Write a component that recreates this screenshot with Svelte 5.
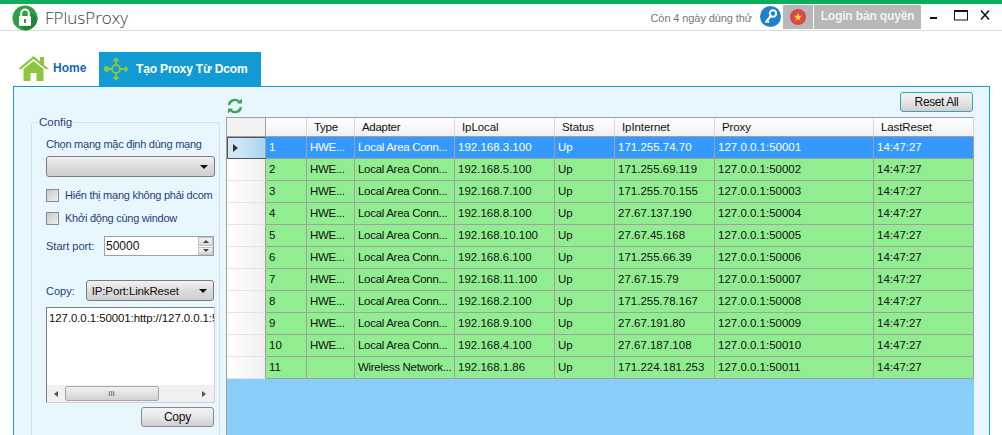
<script>
  const columns = ['', 'Type', 'Adapter', 'IpLocal', 'Status', 'IpInternet', 'Proxy', 'LastReset'];
  const rows = [
    ['1', 'HWE...', 'Local Area Conn...', '192.168.3.100', 'Up', '171.255.74.70', '127.0.0.1:50001', '14:47:27'],
    ['2', 'HWE...', 'Local Area Conn...', '192.168.5.100', 'Up', '171.255.69.119', '127.0.0.1:50002', '14:47:27'],
    ['3', 'HWE...', 'Local Area Conn...', '192.168.7.100', 'Up', '171.255.70.155', '127.0.0.1:50003', '14:47:27'],
    ['4', 'HWE...', 'Local Area Conn...', '192.168.8.100', 'Up', '27.67.137.190', '127.0.0.1:50004', '14:47:27'],
    ['5', 'HWE...', 'Local Area Conn...', '192.168.10.100', 'Up', '27.67.45.168', '127.0.0.1:50005', '14:47:27'],
    ['6', 'HWE...', 'Local Area Conn...', '192.168.6.100', 'Up', '171.255.66.39', '127.0.0.1:50006', '14:47:27'],
    ['7', 'HWE...', 'Local Area Conn...', '192.168.11.100', 'Up', '27.67.15.79', '127.0.0.1:50007', '14:47:27'],
    ['8', 'HWE...', 'Local Area Conn...', '192.168.2.100', 'Up', '171.255.78.167', '127.0.0.1:50008', '14:47:27'],
    ['9', 'HWE...', 'Local Area Conn...', '192.168.9.100', 'Up', '27.67.191.80', '127.0.0.1:50009', '14:47:27'],
    ['10', 'HWE...', 'Local Area Conn...', '192.168.4.100', 'Up', '27.67.187.108', '127.0.0.1:50010', '14:47:27'],
    ['11', '', 'Wireless Network...', '192.168.1.86', 'Up', '171.224.181.253', '127.0.0.1:50011', '14:47:27']
  ];
</script>

<div class="window">
  <header class="titlebar">
    <svg class="logo" width="26" height="26" viewBox="0 0 26 26">
      <circle cx="13" cy="13" r="12.5" fill="#2f9e44"/>
      <path d="M13 25.5A12.5 12.5 0 0 0 25.5 13 L19 8v12H8l5 5.5z" fill="#23853a"/>
      <rect x="7" y="11" width="12" height="10" rx="1" fill="#fff"/>
      <path d="M9.2 11V8.4a3.8 3.8 0 0 1 7.6 0V11" fill="none" stroke="#fff" stroke-width="2"/>
      <rect x="12" y="14" width="2" height="4" fill="#2f9e44"/>
    </svg>
    <span class="app-name">FPlusProxy</span>
    <span class="trial">Còn 4 ngày dùng thử</span>
    <svg class="key" width="21" height="21" viewBox="0 0 21 21">
      <circle cx="10.5" cy="10.5" r="10.5" fill="#1c7fd0"/>
      <circle cx="13" cy="7.5" r="3.2" fill="none" stroke="#fff" stroke-width="2"/>
      <path d="M10.8 10 5.5 16.5M7 14.8l2 1.7" fill="none" stroke="#fff" stroke-width="2"/>
    </svg>
    <div class="flag-box">
      <svg width="16" height="16" viewBox="0 0 16 16">
        <circle cx="8" cy="8" r="8" fill="#d9474a"/>
        <path d="M8 3.6 9.1 6.8h3.3L9.700 8.800l1 3.200L8 10l-2.700 2 1-3.200-2.700-2h3.300z" fill="#f7d533"/>
      </svg>
    </div>
    <div class="login">Login bản quyền</div>
    <div class="win-controls">
      <svg class="min" width="8" height="20" viewBox="0 0 8 20"><rect x="0" y="8" width="7" height="2" fill="#111"/></svg>
      <svg class="max" width="14" height="20" viewBox="0 0 14 20"><rect x="0.5" y="2" width="13" height="9" fill="none" stroke="#111"/><rect x="0" y="1" width="14" height="2" fill="#111"/></svg>
      <svg class="close" width="10" height="20" viewBox="0 0 10 20"><path d="M1 1.500 9 10.500M9 1.500 1 10.500" stroke="#111" stroke-width="1.500"/></svg>
    </div>
  </header>

  <nav class="tabs">
    <div class="tab home">
      <svg width="31" height="25" viewBox="0 0 31 25">
        <path d="M15.500 0 31 13h-3.500L15.500 3 3.500 13H0z" fill="#8cc63f"/>
        <rect x="22" y="1" width="4" height="8" fill="#8cc63f"/>
        <path d="M5.500 13 15.500 5l10 8v12h-7v-8h-6v8h-7z" fill="#8cc63f"/>
      </svg>
      <span>Home</span>
    </div>
    <div class="tab active">
      <svg width="24" height="24" viewBox="0 0 24 24" fill="none" stroke="#8cc63f" stroke-width="1.800">
        <circle cx="12" cy="12" r="4"/>
        <path d="M12 8V2M12 16v6M16 12h7M8 12H3"/>
        <path d="M9.500 4 12 1.500 14.500 4M9.500 20 12 22.500 14.500 20M21 9.500 23.500 12 21 14.500"/>
        <circle cx="2.500" cy="12" r="2" fill="#8cc63f"/>
      </svg>
      <span>Tạo Proxy Từ Dcom</span>
    </div>
  </nav>

  <main class="panel">
    <fieldset class="config">
      <legend>Config</legend>
      <div class="label first">Chọn mạng mặc định dùng mạng</div>
      <div class="combo wide"><span></span><i class="arrow"></i></div>
      <div class="check one"><b></b><span>Hiển thị mạng không phải dcom</span></div>
      <div class="check two"><b></b><span>Khởi động cùng window</span></div>
      <div class="port">
        <span class="port-label">Start port:</span>
        <div class="spin">
          <span>50000</span>
          <div class="spin-btns"><i class="up"></i><i class="down"></i></div>
        </div>
      </div>
      <div class="copy-row">
        <span class="copy-label">Copy:</span>
        <div class="combo short"><span>IP:Port:LinkReset</span><i class="arrow"></i></div>
      </div>
      <div class="textbox">
        <div class="text">127.0.0.1:50001:http://127.0.0.1:5</div>
        <div class="hscroll">
          <i class="left"></i>
          <div class="thumb">III</div>
          <i class="right"></i>
        </div>
      </div>
      <div class="copy-action"><button class="btn copy-btn">Copy</button></div>
    </fieldset>

    <section class="content">
      <div class="toolbar">
        <svg class="refresh" width="18" height="18" viewBox="0 0 18 18" fill="none" stroke="#3aa655" stroke-width="2.400">
          <path d="M3 8a6 6 0 0 1 10.500-3"/>
          <path d="M15 10a6 6 0 0 1-10.500 3"/>
          <path d="M16 1.500v5h-5z" fill="#3aa655" stroke="none"/>
          <path d="M2 16.500v-5h5z" fill="#3aa655" stroke="none"/>
        </svg>
        <button class="btn reset">Reset All</button>
      </div>
      <div class="grid">
        <div class="row head">
          <div class="rh"></div>
          {#each columns as c}<div class="cell">{c}</div>{/each}
        </div>
        {#each rows as r, i}
          <div class="row" class:selected={i === 0}>
            <div class="rh">{#if i === 0}<i class="pointer"></i>{/if}</div>
            {#each r as v}<div class="cell">{v}</div>{/each}
          </div>
        {/each}
      </div>
    </section>
  </main>
</div>

<style>
  :global(body) { margin: 0; background: #fff; }
  .window {
    height: 435px;
    overflow: hidden;
    border-top: 4px solid #0cae5b;
    box-sizing: border-box;
    font-family: "Liberation Sans", Arial, sans-serif;
    font-size: 11.5px;
    color: #111;
    display: flex;
    flex-direction: column;
  }
  .titlebar {
    height: 27px;
    flex: none;
    box-sizing: border-box;
    border-bottom: 1px solid #dcdcdc;
    display: flex;
    align-items: flex-start;
  }
  .titlebar > * { flex: none; }
  .logo { margin: 1px 0 0 12px; }
  .app-name {
    margin: 0 0 0 7px;
    font-family: "Open Sans", sans-serif;
    font-weight: 300;
    font-size: 17px;
    line-height: 27px;
    color: #444;
  }
  .trial { margin: 6px 0 0 auto; font-size: 11px; letter-spacing: -0.100px; line-height: 16px; color: #777; }
  .key { margin: 2px 0 0 8px; }
  .flag-box {
    width: 30px;
    height: 24px;
    margin: 1px 0 0 2px;
    background: #b8b8b8;
    display: flex;
    align-items: center;
    justify-content: center;
  }
  .login {
    width: 107px;
    height: 24px;
    margin: 1px 0 0 1px;
    background: #b8b8b8;
    color: #f2f2f2;
    font-weight: bold;
    font-size: 12px;
    letter-spacing: -0.150px;
    line-height: 22px;
    text-align: center;
    white-space: nowrap;
  }
  .win-controls { display: flex; margin: 5px 0 0 9px; width: 72px; box-sizing: border-box; }
  .max { margin-left: 16px; }
  .close { margin-left: 12px; }
  .tabs {
    display: flex;
    height: 55px;
    flex: none;
    align-items: flex-end;
    padding-left: 18px;
    font-weight: bold;
    font-size: 12px;
  }
  .tab { height: 34px; display: flex; align-items: center; box-sizing: border-box; }
  .home { width: 81px; color: #1668b8; gap: 4px; padding-bottom: 2px; }
  .active { width: 162px; background: #129ad5; color: #fff; padding-left: 5px; gap: 8px; letter-spacing: -0.150px; }
  .panel {
    flex: 1;
    width: 977px;
    margin-left: 13px;
    box-sizing: border-box;
    border: 1px solid #129ad5;
    background: #e8f7fe;
    display: flex;
    padding-left: 17px;
    align-items: flex-start;
  }
  .config {
    width: 189px;
    height: 400px;
    flex: none;
    box-sizing: border-box;
    margin: 28px 0 0;
    padding: 0 5px 0 14px;
    border: 1px solid #d3e0e8;
    border-radius: 3px;
    min-width: 0;
    font-size: 11px;
  }
  legend { padding: 0 1px; margin-left: -8px; color: #1f3f7a; line-height: 14px; font-size: 11.5px; }
  .label { color: #1f3f7a; line-height: 14px; white-space: nowrap; letter-spacing: -0.250px; }
  .first { margin-top: 8px; }
  .combo {
    height: 21px;
    box-sizing: border-box;
    border: 1px solid #7d7d7d;
    border-radius: 3px;
    background: linear-gradient(#f2f2f2, #dcdcdc 50%, #cfcfcf);
    display: flex;
    align-items: center;
    justify-content: space-between;
    padding: 0 6px 0 3px;
    font-size: 11.500px;
    letter-spacing: -0.150px;
  }
  .wide { margin-top: 5px; width: 169px; }
  .arrow {
    width: 0;
    height: 0;
    border: 4px solid transparent;
    border-top: 4px solid #111;
    border-bottom: 0;
  }
  .check { display: flex; align-items: center; gap: 6px; color: #1f3f7a; height: 14px; white-space: nowrap; letter-spacing: -0.250px; }
  .check b {
    width: 11px;
    height: 11px;
    flex: none;
    border: 1px solid #8a8a8a;
    background: linear-gradient(135deg, #c9c9c9, #f0f0f0);
  }
  .one { margin-top: 11px; }
  .two { margin-top: 9px; }
  .port { display: flex; align-items: center; margin-top: 11px; }
  .port-label { width: 58px; color: #1f3f7a; }
  .spin {
    width: 110px;
    height: 20px;
    box-sizing: border-box;
    border: 1px solid #a0a0a0;
    background: #fff;
    display: flex;
    justify-content: space-between;
    align-items: center;
    padding-left: 1px;
    font-size: 12px;
  }
  .spin-btns { width: 15px; height: 18px; display: flex; flex-direction: column; gap: 1px; }
  .spin-btns i {
    flex: 1;
    display: flex;
    align-items: center;
    justify-content: center;
    background: linear-gradient(#f4f4f4, #d8d8d8);
    border: 1px solid #c4c4c4;
    box-sizing: border-box;
  }
  .spin-btns i::after {
    content: "";
    border: 3px solid transparent;
  }
  .up::after { border-bottom-color: #444 !important; border-top: 0 !important; }
  .down::after { border-top-color: #444 !important; border-bottom: 0 !important; }
  .copy-row { display: flex; align-items: center; margin-top: 24px; }
  .copy-label { width: 40px; color: #1f3f7a; }
  .short { width: 129px; padding-left: 5px; }
  .textbox {
    width: 169px;
    height: 96px;
    box-sizing: border-box;
    margin-top: 6px;
    border: 1px solid #7a7a7a;
    border-right-color: #d0d0d0;
    border-bottom-color: #d0d0d0;
    background: #fff;
    display: flex;
    flex-direction: column;
    justify-content: space-between;
    overflow: hidden;
  }
  .text { white-space: nowrap; padding: 3px 0 0 2px; line-height: 15px; font-size: 11.500px; letter-spacing: -0.100px; }
  .hscroll {
    height: 17px;
    background: #f0f0f0;
    display: flex;
    align-items: center;
    justify-content: space-between;
    padding: 0 8px 0 7px;
  }
  .left { border: 3px solid transparent; border-right: 4px solid #555; border-left: 0; }
  .right { border: 3px solid transparent; border-left: 4px solid #555; border-right: 0; }
  .thumb {
    width: 94px;
    height: 15px;
    margin-left: 6px;
    margin-right: 43px;
    box-sizing: border-box;
    border: 1px solid #a8a8a8;
    border-radius: 2px;
    background: linear-gradient(#f0f0f0, #d2d2d2);
    font-size: 8px;
    line-height: 13px;
    text-align: center;
    color: #555;
  }
  .copy-action { display: flex; justify-content: flex-end; width: 168px; margin-top: 4px; }
  .btn {
    width: 73px;
    height: 20px;
    padding: 0;
    font: inherit;
    font-size: 12px;
    letter-spacing: -0.200px;
    color: #111;
    box-sizing: border-box;
    border: 1px solid #8a8a8a;
    border-radius: 3px;
    background: linear-gradient(#f4f4f4, #e6e6e6 50%, #cfcfcf);
  }
  .content { width: 748px; flex: none; margin-left: 6px; display: flex; flex-direction: column; }
  .toolbar {
    height: 30px;
    display: flex;
    justify-content: space-between;
    align-items: flex-start;
  }
  .refresh { margin-top: 10px; }
  .toolbar .reset {
    margin-top: 5px;
    margin-right: 1px;
    border-color: #3b9fc4;
    border-width: 1.500px;
    letter-spacing: -0.400px;
  }
  .grid {
    height: 320px;
    background: #87cefa;
    border-left: 1px solid #a0a0a0;
    border-top: 1px solid #a0a0a0;
    box-sizing: border-box;
  }
  .row {
    display: grid;
    grid-template-columns: 39px 41px 48px 100px 100px 60px 100px 159px 100px;
    height: 22px;
  }
  .row .cell {
    background: #90ee90;
    border-right: 1px solid #a0a0a0;
    border-bottom: 1px solid #a0a0a0;
    box-sizing: border-box;
    padding-left: 3px;
    line-height: 21px;
    white-space: nowrap;
    overflow: hidden;
  }
  .row .cell:nth-child(3), .row .cell:nth-child(4) { letter-spacing: -0.300px; }
  .rh {
    background: linear-gradient(90deg, #fff, #f0f0f0);
    border-bottom: 1px solid #e4e4e4;
    border-right: 1px solid #a0a0a0;
    box-sizing: border-box;
    display: flex;
    align-items: center;
  }
  .head { height: 19px; }
  .head .cell {
    background: linear-gradient(#fff, #f0f0f0);
    border-right-color: #d8d8d8;
    border-bottom: 1px solid #a0a0a0;
    padding-left: 7px;
    line-height: 19px;
    letter-spacing: -0.100px;
  }
  .head .rh { border-bottom: 1px solid #a0a0a0; background: #f2f2f2; }
  .selected .cell { background: #3399ff; color: #fff; }
  .selected .rh {
    background: linear-gradient(90deg, #cfe6f5 0, #cfe6f5 30%, #a8d5f0);
    border: 1px solid #555;
    border-right-color: #a0a0a0;
    padding-left: 5px;
  }
  .pointer { border: 4px solid transparent; border-left: 5px solid #333; border-right: 0; }
</style>
